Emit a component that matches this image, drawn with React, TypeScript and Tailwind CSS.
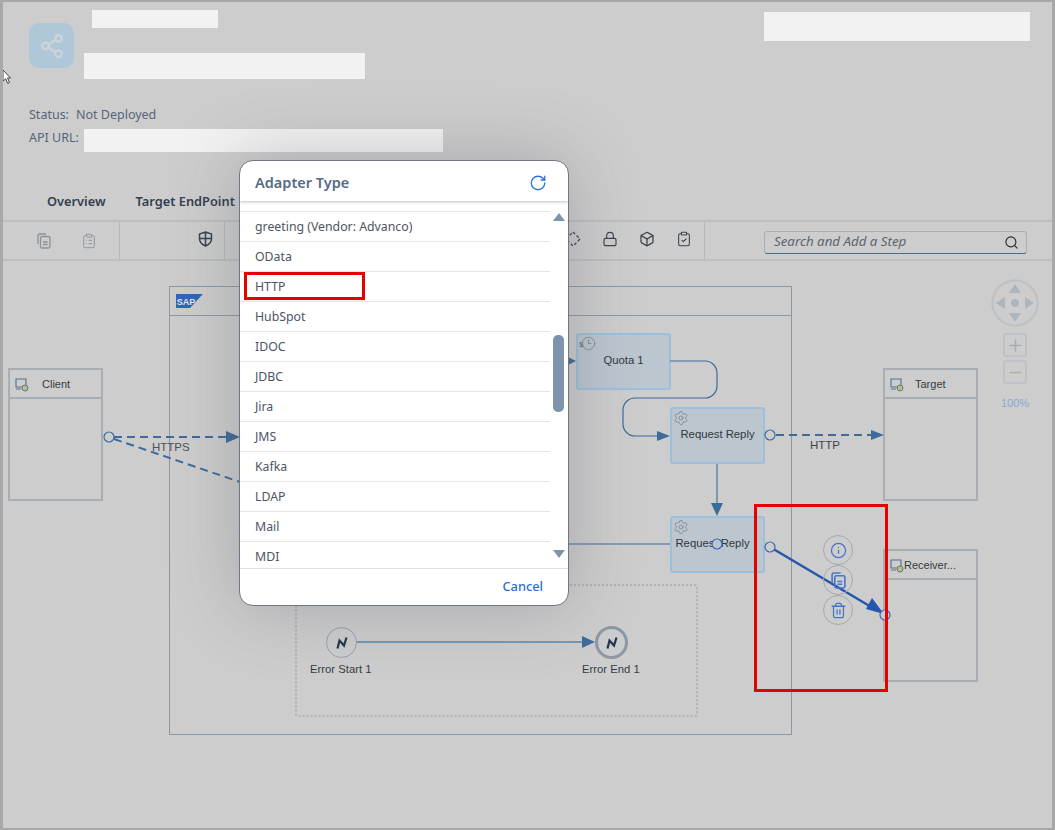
import { Box, ClipboardCheck, ClipboardList, Clock3, Info, Lock, Minus, Plus, RotateCw, Search, Settings, Share2, Trash2 } from 'lucide-react'

const ui = 'font-["Noto_Sans",sans-serif]'
const arial = 'font-["Liberation_Sans",Arial,sans-serif]'

const adapters = ['greeting (Vendor: Advanco)', 'OData', 'HTTP', 'HubSpot', 'IDOC', 'JDBC', 'Jira', 'JMS', 'Kafka', 'LDAP', 'Mail', 'MDI']

function MonitorIcon() {
  return (
    <svg width="14" height="14" viewBox="0 0 14 14" fill="none">
      <path d="M1 1h10v8H1zM1 11h5" stroke="#4f7396" strokeWidth="1.1" />
      <circle cx="10" cy="10" r="3" fill="#b9bd7f" stroke="#66788a" />
    </svg>
  )
}

function DocStack({ size = 16, width = 1.3 }: { size?: number; width?: number }) {
  return (
    <svg width={size} height={size} viewBox="0 0 16 16" fill="none" stroke="currentColor" strokeWidth={width}>
      <path d="M2 11V2.5A1.5 1.5 0 0 1 3.500 1H10" />
      <rect x="4.500" y="3.500" width="9.500" height="11.500" rx="1.500" />
      <path d="M7 9h4.500M7 11.500h4.500" />
    </svg>
  )
}

function Pool({ name, className, offset }: { name: string; className: string; offset: string }) {
  return (
    <div className={`absolute w-[95px] border-2 border-[#a8aeb4] ${className}`}>
      <div className={`relative flex h-[29px] items-center border-b-2 border-[#a8aeb4] pt-[2px] ${offset} text-[11px] text-[#353b42]`}>
        <div className="absolute left-[5px] top-[8px]">
          <MonitorIcon />
        </div>
        {name}
      </div>
    </div>
  )
}

function Step({ name, className, quota }: { name: string; className: string; quota?: boolean }) {
  return (
    <div className={`absolute flex h-[57px] w-[95px] items-center justify-center rounded-[3px] border-2 border-[#9dc0da] bg-[#bcc6cf] pb-[2px] text-[11.300px] text-[#31363c] ${className}`}>
      <div className="absolute left-[1px] top-[1px] text-[#767f87]">
        {quota ? (
          <div className="relative">
            <Clock3 size={15} strokeWidth={1.2} className="ml-[2px]" />
            <span className="absolute left-0 top-[5px] text-[8px] font-bold leading-none">$</span>
          </div>
        ) : (
          <Settings size={16} strokeWidth={1.1} />
        )}
      </div>
      {name}
    </div>
  )
}

function ErrorMark() {
  return (
    <svg width="14" height="14" viewBox="0 0 14 14" fill="none">
      <path d="M2.500 12.500 4.500 4.500 9 9.500 11.500 1.500" stroke="#27364a" strokeWidth="2.200" />
    </svg>
  )
}

function Wires() {
  const arrow = '#3e6b9a'
  return (
    <svg className="absolute left-0 top-0" width="1049" height="566" viewBox="3 261 1049 566" fill="none">
      <g stroke={arrow} strokeWidth="2" strokeDasharray="8 5">
        <path d="M114 437H228" />
        <path d="M114 439 240 482" />
        <path d="M776 435H872" />
      </g>
      <g stroke={arrow} strokeWidth="1.2">
        <path d="M670 361h35a12 12 0 0 1 12 12v13a12 12 0 0 1-12 12h-70a12 12 0 0 0-12 12v14a12 12 0 0 0 12 12h24" />
        <path d="M568 544H670" />
      </g>
      <path d="M717 464V506" stroke="#5d83a8" strokeWidth="1.5" />
      <path d="M356 642H584" stroke="#5d83a8" strokeWidth="1.5" />
      <g fill={arrow}>
        <path d="M226 431l14 6-14 6z" />
        <path d="M566 356l10 5-10 5z" />
        <path d="M657 431l13 5-13 5z" />
        <path d="M871 430l13 5-13 5z" />
        <path d="M711 503h12l-6 13z" />
        <path d="M582 636l13 6-13 6z" />
      </g>
      <path d="M770 547 878 611" stroke="#2456ae" strokeWidth="2.500" />
      <path d="M872 598l12 16-18-5z" fill="#2456ae" />
      <g stroke={arrow} strokeWidth="1.2" fill="#cdcdcd">
        <circle cx="109" cy="437" r="5" />
        <circle cx="770" cy="435" r="5" />
      </g>
      <g stroke="#3e67bd" strokeWidth="1.2">
        <circle cx="717" cy="544" r="5" fill="#bcc6cf" />
        <circle cx="770" cy="547" r="5" fill="#cdcdcd" />
        <circle cx="885" cy="615" r="5" fill="#cdcdcd" />
      </g>
    </svg>
  )
}

function Canvas() {
  return (
    <div className={`relative flex-1 ${arial}`}>
      <div className="absolute left-[166px] top-[25px] h-[449px] w-[623px] border border-[#8e98a2]">
        <div className="flex h-[29px] items-center border-b border-[#8e98a2] pl-[6px]">
          <svg width="27" height="14" viewBox="0 0 27 14">
            <path d="M0 0h27L14 14H0z" fill="#2f66b8" />
            <text x="0.800" y="10.500" fontSize="9" fontWeight="700" fill="#e3e7ec" fontFamily="Liberation Sans">SAP</text>
          </svg>
        </div>
      </div>
      <Pool name="Client" className="left-[5px] top-[107px] h-[133px]" offset="pl-[32px]" />
      <Pool name="Target" className="left-[880px] top-[107px] h-[133px]" offset="pl-[30px]" />
      <Pool name="Receiver..." className="left-[880px] top-[288px] h-[133px]" offset="pl-[19px]" />
      <Step name="Quota 1" quota className="left-[573px] top-[72px]" />
      <Step name="Request Reply" className="left-[667px] top-[146px]" />
      <Step name="Request Reply" className="left-[667px] top-[255px] pr-[10px]" />
      <div className="absolute left-[292px] top-[323px] h-[133px] w-[403px] rounded-[3px] border-2 border-dotted border-[#aeb3b8]" />
      <Wires />

      <span className="absolute left-[149px] top-[178px] text-[11.500px] text-[#4b5158]">HTTPS</span>
      <span className="absolute left-[807px] top-[176px] text-[11.500px] text-[#3d444b]">HTTP</span>

      <div className="absolute left-[323px] top-[366px] flex h-[31px] w-[31px] items-center justify-center rounded-full border border-[#98a2ac] bg-[#cbcdce]">
        <ErrorMark />
      </div>
      <span className="absolute left-[307px] top-[400px] text-[11.300px] text-[#383d43]">Error Start 1</span>
      <div className="absolute left-[592px] top-[365px] flex h-[33px] w-[33px] items-center justify-center rounded-full border-[3px] border-[#8e98a2] bg-[#cbcdce]">
        <ErrorMark />
      </div>
      <span className="absolute left-[579px] top-[400px] text-[11.300px] text-[#383d43]">Error End 1</span>

      <div className="absolute left-[820px] top-[274px] flex flex-col text-[#4a74c4]">
        <div className="flex h-[30px] w-[30px] items-center justify-center rounded-full border border-[#a4a9ae]"><Info size={17} strokeWidth={1.8} /></div>
        <div className="flex h-[30px] w-[30px] items-center justify-center rounded-full border border-[#a4a9ae]"><DocStack size={17} width={1.5} /></div>
        <div className="flex h-[30px] w-[30px] items-center justify-center rounded-full border border-[#a4a9ae]"><Trash2 size={17} strokeWidth={1.8} /></div>
      </div>

      <div className="absolute left-[751px] top-[243px] h-[188px] w-[134px] border-[3px] border-[#e60000]" />

      {/* navigator */}
      <div className="absolute left-[988px] top-[18px] flex w-[48px] flex-col items-center">
        <svg width="48" height="48" viewBox="0 0 48 48">
          <circle cx="24" cy="24" r="22.500" fill="none" stroke="#bec2c6" strokeWidth="2.500" />
          <circle cx="24" cy="24" r="4" fill="#aeb5bc" />
          <path d="M24 5l6 9H18zM24 43l-6-9h12zM5 24l9-6v12zM43 24l-9 6V18z" fill="#aeb5bc" />
        </svg>
        <div className="mt-[6px] flex h-[24px] w-[24px] items-center justify-center rounded-[3px] border-2 border-[#bec2c6] text-[#a7afb6]"><Plus size={19} strokeWidth={2} /></div>
        <div className="mt-[3px] flex h-[24px] w-[24px] items-center justify-center rounded-[3px] border-2 border-[#bec2c6] text-[#a7afb6]"><Minus size={19} strokeWidth={2} /></div>
        <span className="mt-[11px] text-[11px] text-[#8ea5d2]">100%</span>
      </div>
    </div>
  )
}

function Modal() {
  return (
    <div className={`absolute left-[236px] top-[158px] flex h-[446px] w-[330px] flex-col overflow-hidden rounded-[14px] border border-[#6f7780] bg-white shadow-[0_0_70px_rgba(80,85,95,0.32)] ${ui}`}>
      <div className="z-10 flex h-[40px] shrink-0 items-center justify-between pl-[15px] pr-[21px] pt-[4px] shadow-[0_1px_3px_rgba(0,0,0,0.25)]">
        <span className="text-[14.500px] font-semibold text-[#556b87]">Adapter Type</span>
        <RotateCw size={18} strokeWidth={1.7} className="text-[#2a6fdb]" />
      </div>
      <div className="flex h-[368px] shrink-0 overflow-hidden border-b border-[#dfe1e3]">
        <div className="w-[310px] pt-[10px]">
          {adapters.map((name) => (
            <div key={name} className="relative flex h-[30px] items-center border-t border-[#e3e5e7] pl-[15px] pt-[2px] text-[12.300px] text-[#4d5563]">
              {name}
              {name === 'HTTP' && <div className="absolute left-[4px] top-0 h-[28px] w-[121px] border-[3px] border-[#e60000]" />}
            </div>
          ))}
        </div>
        <div className="relative flex-1">
          <div className="absolute left-[3px] top-[12px] h-0 w-0 border-x-[6px] border-b-[8px] border-x-transparent border-b-[#7f93ad]" />
          <div className="absolute left-[3px] top-[134px] h-[77px] w-[11px] rounded-[5px] bg-[#7f93ad]" />
          <div className="absolute left-[3px] top-[349px] h-0 w-0 border-x-[6px] border-t-[8px] border-x-transparent border-t-[#7f93ad]" />
        </div>
      </div>
      <div className="flex flex-1 items-center justify-end pr-[25px] text-[12.800px] font-medium text-[#2a6fdb]">Cancel</div>
    </div>
  )
}

export default function App() {
  return (
    <div className="relative flex h-[830px] w-[1055px] flex-col overflow-hidden border-x-[3px] border-y-2 border-[#a8a8a8] bg-[#cdcdcd]">
      <div className={`h-[220px] shrink-0 border-b-2 border-[#bcbec0] px-[26px] ${ui}`}>
        <div className="flex h-[86px] items-start">
          <div className="mt-[21px] flex h-[45px] w-[45px] items-center justify-center rounded-[10px] bg-[#aec8d9] text-[#cfd4d8]">
            <Share2 size={26} strokeWidth={2} />
          </div>
          <div>
            <div className="ml-[18px] mt-[8px] h-[18px] w-[126px] bg-[#f2f2f2]" />
            <div className="ml-[10px] mt-[25px] h-[26px] w-[281px] bg-[#f2f2f2]" />
          </div>
          <div className="ml-auto mr-[-4px] mt-[10px] h-[29px] w-[266px] bg-[#f2f2f2]" />
        </div>
        <div className="mt-[18px] flex h-[18px] items-center gap-[7px] text-[12.500px] text-[#566579]">
          <span>Status:</span>
          <span>Not Deployed</span>
        </div>
        <div className="mt-[5px] flex h-[23px] items-center gap-[3px] text-[12.500px] text-[#566579]">
          <span className="w-[52px] pb-[4px]">API URL:</span>
          <div className="h-[23px] w-[359px] bg-[#f2f2f2]" />
        </div>
        <div className="mt-[40px] flex gap-[30px] pl-[18px] text-[12.800px] font-semibold text-[#33404f]">
          <span>Overview</span>
          <span>Target EndPoint</span>
        </div>
      </div>

      <div className="flex h-[39px] shrink-0 items-center border-b-2 border-[#bcbec0] text-[#3c434b]">
        <div className="flex h-full w-[117px] items-center gap-[29px] border-r border-[#b5b8bb] pl-[33px] text-[#8c9298]">
          <DocStack />
          <ClipboardList size={16} strokeWidth={1.3} />
        </div>
        <div className="flex h-full w-[105px] items-center border-r border-[#b5b8bb] pb-[4px] pl-[78px]">
          <svg width="15" height="16" viewBox="0 0 15 16" fill="none" stroke="currentColor" strokeWidth="1.500">
            <path d="M7.500 1 13.500 3v5c0 3.500-2.500 5.500-6 7-3.500-1.500-6-3.500-6-7V3zM7.500 1v14M1.500 7.500h12" />
          </svg>
        </div>
        <div className="ml-[340px] flex h-full items-center gap-[21px] border-r border-[#b5b8bb] pb-[3px] pr-[12px]">
          <svg width="16" height="16" viewBox="0 0 16 16" fill="none" stroke="currentColor" strokeWidth="1.300" strokeDasharray="3 2">
            <path d="M8 1l7 7-7 7-7-7z" />
          </svg>
          <Lock size={16} strokeWidth={1.7} />
          <Box size={16} strokeWidth={2} strokeDasharray="3 1.500" />
          <ClipboardCheck size={16} strokeWidth={1.6} />
        </div>
        <div className={`ml-[59px] mt-[3px] flex h-[23px] w-[263px] items-center justify-between rounded-[3px] border border-[#a7afb6] border-b-[#4d6a87] pl-[9px] pr-[7px] text-[13.300px] italic text-[#5b6570] ${ui}`}>
          <span>Search and Add a Step</span>
          <Search size={15} strokeWidth={1.8} className="text-[#23282e]" />
        </div>
      </div>

      <Canvas />
      <Modal />

      <svg className="absolute left-0 top-[68px]" width="9" height="15" viewBox="0 0 9 15">
        <path d="M0 0l7.500 8H4.500l2 4.500-1.800.8-2-4.500L0 11z" fill="#fff" stroke="#222" strokeWidth="0.800" />
      </svg>
    </div>
  )
}
